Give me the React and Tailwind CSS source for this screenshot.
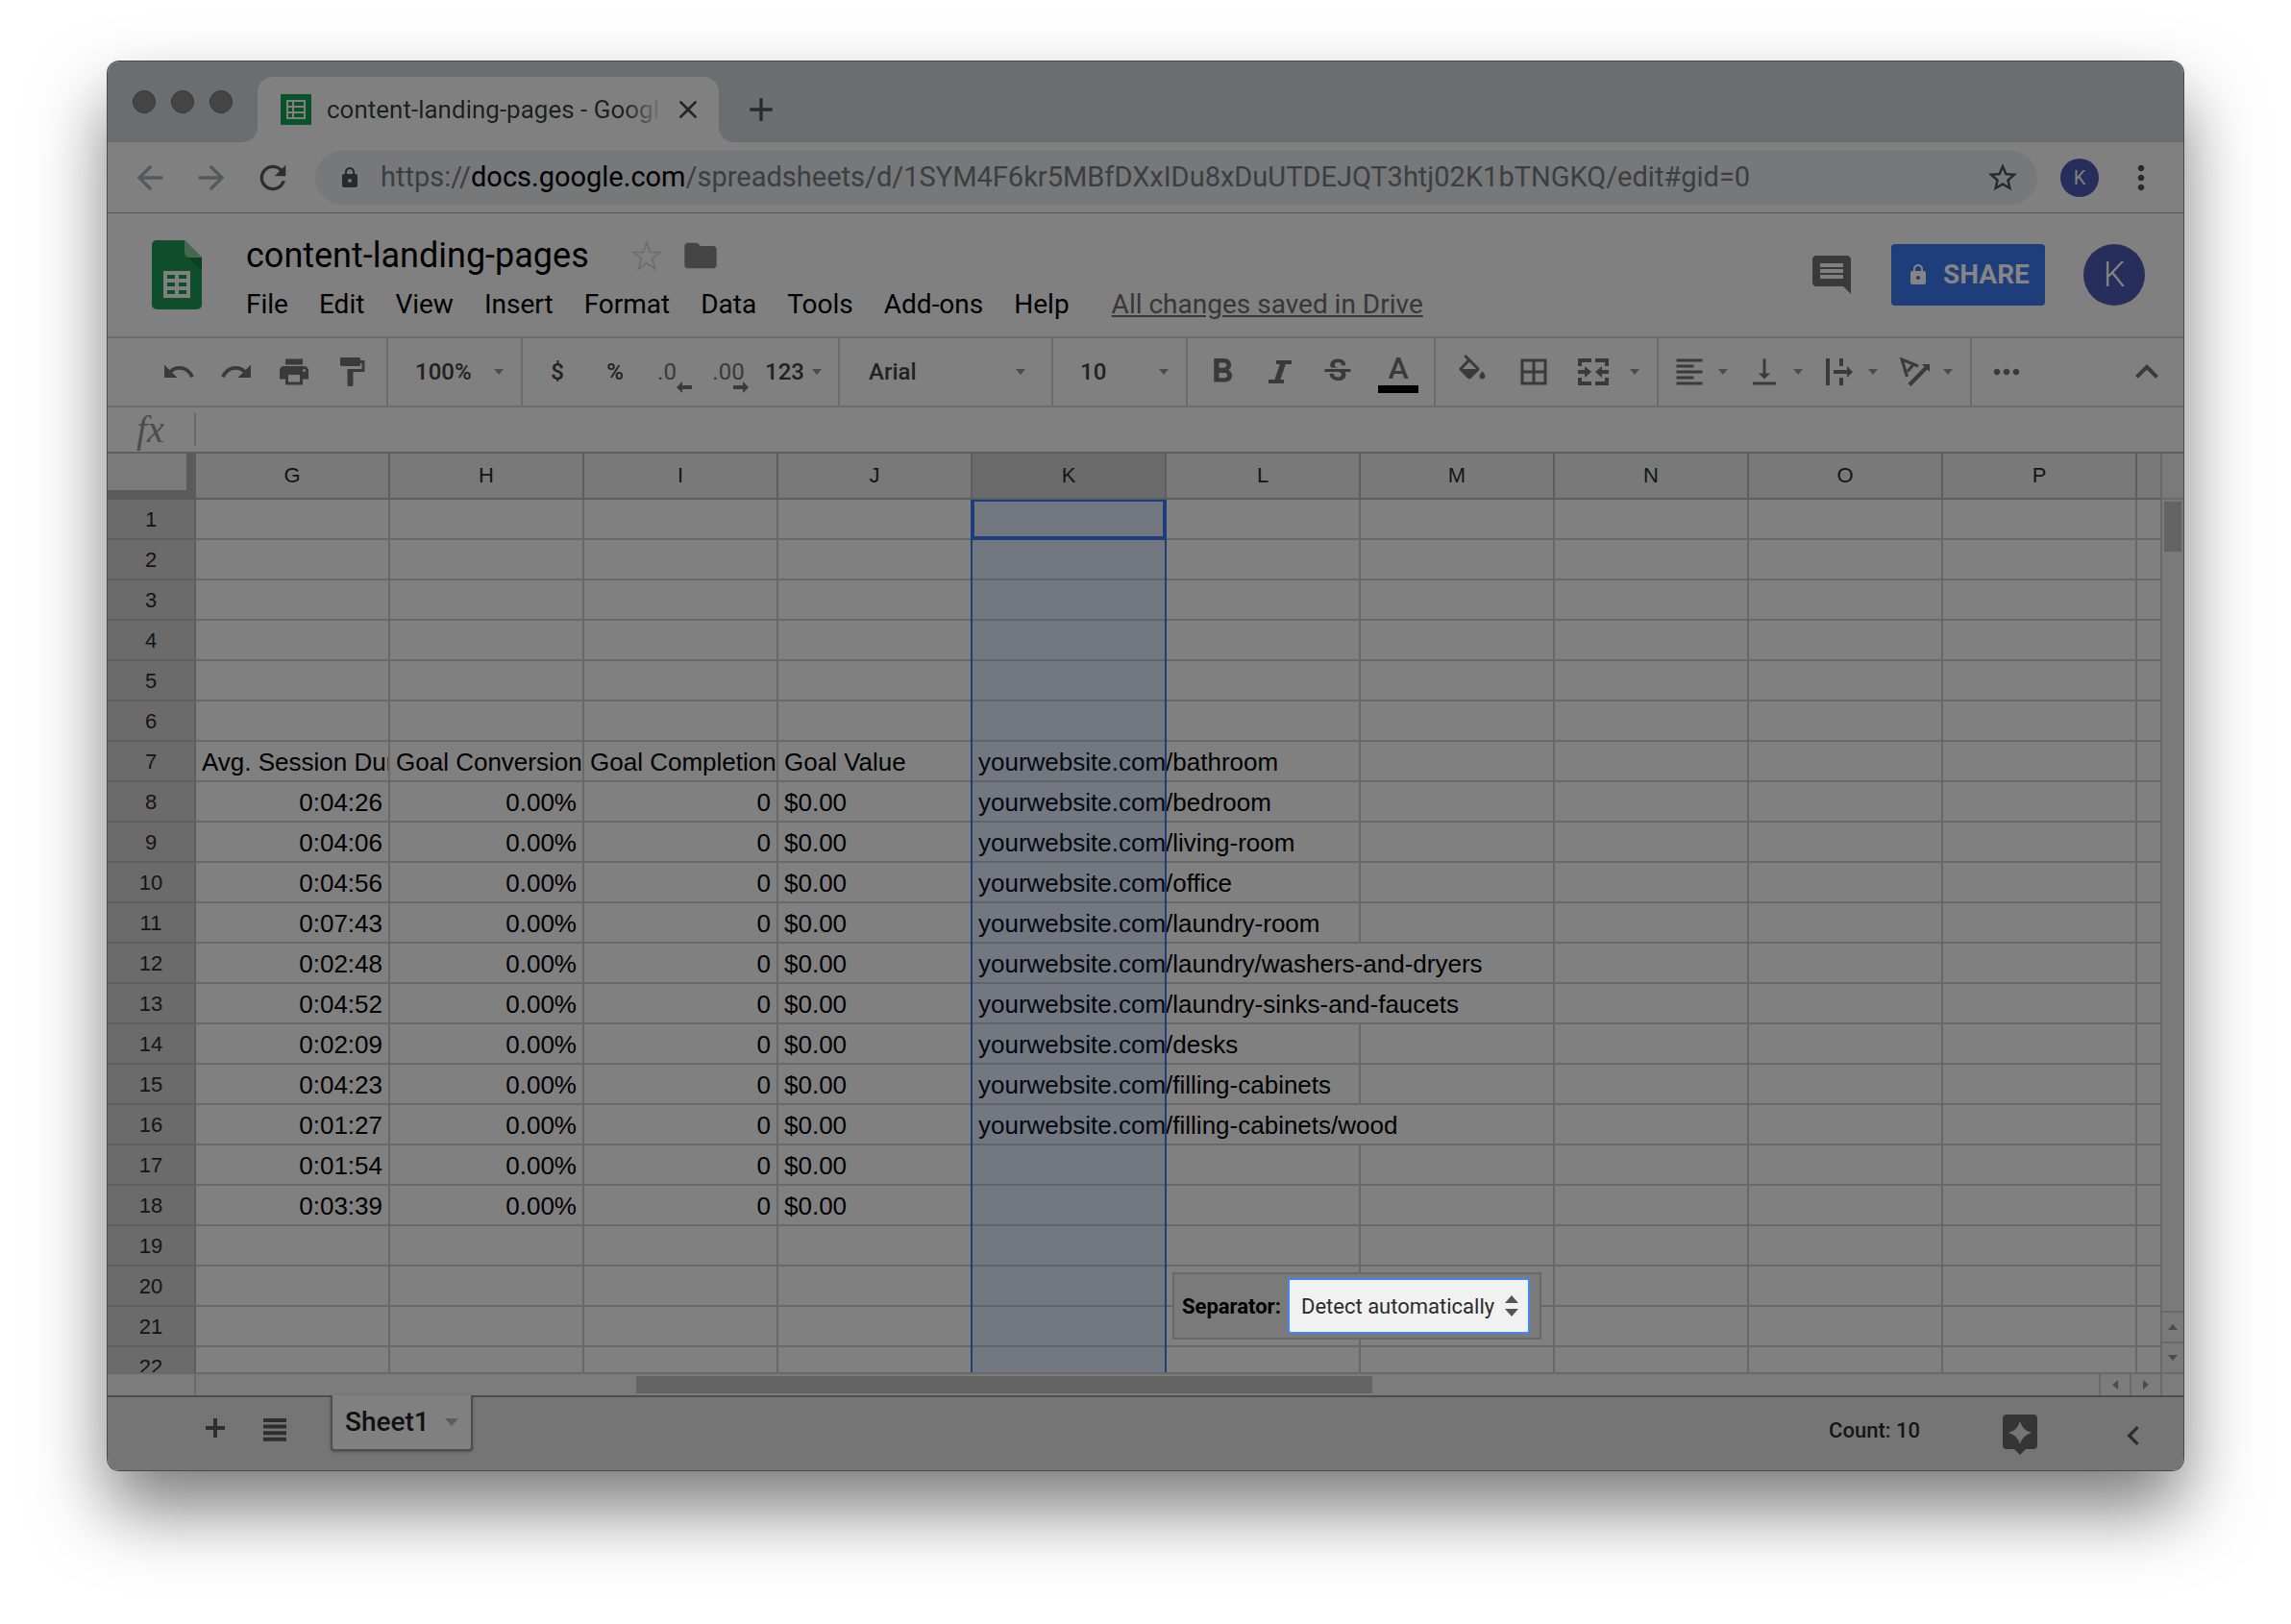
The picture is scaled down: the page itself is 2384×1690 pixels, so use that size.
import {
  MdArrowBack,
  MdArrowForward,
  MdBorderAll,
  MdClose,
  MdAdd,
  MdFolder,
  MdFormatAlignLeft,
  MdFormatBold,
  MdFormatPaint,
  MdInsertComment,
  MdKeyboardArrowLeft,
  MdKeyboardArrowUp,
  MdLock,
  MdMoreHoriz,
  MdMoreVert,
  MdPrint,
  MdRedo,
  MdRefresh,
  MdStarBorder,
  MdStrikethroughS,
  MdUndo,
  MdVerticalAlignBottom,
} from "react-icons/md";

const columns = ["G", "H", "I", "J", "K", "L", "M", "N", "O", "P"];

const menus = ["File", "Edit", "View", "Insert", "Format", "Data", "Tools", "Add-ons", "Help"];

const durations = [
  "0:04:26",
  "0:04:06",
  "0:04:56",
  "0:07:43",
  "0:02:48",
  "0:04:52",
  "0:02:09",
  "0:04:23",
  "0:01:27",
  "0:01:54",
  "0:03:39",
];

const paths = [
  "bathroom",
  "bedroom",
  "living-room",
  "office",
  "laundry-room",
  "laundry/washers-and-dryers",
  "laundry-sinks-and-faucets",
  "desks",
  "filling-cabinets",
  "filling-cabinets/wood",
];

// rows whose url runs past column L, so the grid line there is hidden
const longRows = [12, 13, 16];

function cellValue(row, col) {
  if (col === "K" && row >= 7 && row <= 16) return `yourwebsite.com/${paths[row - 7]}`;
  if (row === 7) {
    return {
      G: "Avg. Session Dur",
      H: "Goal Conversion",
      I: "Goal Completion",
      J: "Goal Value",
    }[col];
  }
  if (row >= 8 && row <= 18) {
    return { G: durations[row - 8], H: "0.00%", I: "0", J: "$0.00" }[col];
  }
  return "";
}

function cellClass(row, col) {
  const base = "h-[42px] border-b-2 border-[#696969] px-[6px] pt-[2px] pb-0 whitespace-nowrap";
  const right = col === "L" && longRows.includes(row) ? "" : "border-r-2";
  const overflow = col === "K" ? "overflow-visible" : "overflow-hidden";
  const align = row > 7 && ["G", "H", "I"].includes(col) ? "text-right" : "text-left";
  return `${base} ${right} ${overflow} ${align}`;
}

function Caret({ className = "" }) {
  return (
    <svg viewBox="0 0 10 6" className={`h-[6px] w-[10px] shrink-0 text-[#4c4c4c] ${className}`} fill="currentColor" aria-hidden>
      <path d="M0 0h10L5 6z" />
    </svg>
  );
}

function ToolButton({ label, children, className = "w-[60px]" }) {
  return (
    <button type="button" aria-label={label} className={`flex h-full shrink-0 items-center justify-center ${className}`}>
      {children}
    </button>
  );
}

function SplitButton({ label, children, gap = "gap-3" }) {
  return (
    <button type="button" aria-label={label} className={`flex h-full w-[78px] shrink-0 items-center ${gap}`}>
      {children}
      <Caret />
    </button>
  );
}

function ToolSelect({ label, value, className, selectClass = "w-[54px]" }) {
  return (
    <label className={`flex h-full shrink-0 items-center border-r-2 border-[#6b6b6b] ${className}`}>
      <select aria-label={label} className={`appearance-none bg-transparent text-2xl font-medium text-[#222] ${selectClass}`}>
        <option>{value}</option>
      </select>
      <Caret className="ml-auto" />
    </label>
  );
}

function TitleBar() {
  return (
    <div className="flex h-[84px] items-end bg-[#6c6d71]">
      <div className="flex gap-4 self-start pt-[30px] pl-[26px]">
        <span className="size-6 rounded-full border border-[#383838] bg-[#444]" />
        <span className="size-6 rounded-full border border-[#383838] bg-[#444]" />
        <span className="size-6 rounded-full border border-[#383838] bg-[#444]" />
      </div>
      <div className="relative ml-[26px] flex h-[68px] w-[480px] items-center rounded-t-2xl bg-[#808080] pl-6">
        <span className="absolute bottom-0 -left-4 size-4 overflow-hidden">
          <span className="block size-4 rounded-br-2xl shadow-[8px_8px_0_8px_#808080]" />
        </span>
        <span className="absolute -right-4 bottom-0 size-4 overflow-hidden">
          <span className="block size-4 rounded-bl-2xl shadow-[-8px_8px_0_8px_#808080]" />
        </span>
        <svg viewBox="0 0 32 32" className="size-8 shrink-0" aria-hidden>
          <rect width="32" height="32" rx="1" fill="#0a5229" />
          <path d="M6 6h20v20H6z" fill="#808080" />
          <path d="M8 8h4v4H8zM14 8h10v4H14zM8 14h4v4H8zM14 14h10v4H14zM8 20h4v4H8zM14 20h10v4H14z" fill="#0a5229" />
        </svg>
        <span className="ml-4 w-[350px] overflow-hidden text-[26px] whitespace-nowrap text-[#1e1f21] [mask-image:linear-gradient(to_right,black_310px,transparent_350px)]">
          content-landing-pages - Googl
        </span>
        <button type="button" aria-label="Close tab" className="ml-[10px] text-[#222426]">
          <MdClose className="size-8" />
        </button>
      </div>
      <button type="button" aria-label="New tab" className="mb-[14px] ml-6 text-[#2a2b2d]">
        <MdAdd className="size-10" />
      </button>
    </div>
  );
}

function AddressBar() {
  return (
    <div className="flex h-[74px] items-center border-b border-[#555] bg-[#808080] pr-6 pl-6">
      <button type="button" aria-label="Back" className="text-[#56585a]">
        <MdArrowBack className="size-10" />
      </button>
      <button type="button" aria-label="Forward" className="ml-6 text-[#56585a]">
        <MdArrowForward className="size-10" />
      </button>
      <button type="button" aria-label="Reload" className="ml-6 text-[#2c2d2f]">
        <MdRefresh className="size-10" />
      </button>
      <div className="ml-6 flex h-14 min-w-0 flex-1 items-center rounded-full bg-[#76787a] pr-[18px] pl-6">
        <MdLock className="size-6 shrink-0 text-[#28292b]" />
        <span className="ml-5 flex-1 truncate text-[29px] text-[#3b3e41]">
          https://<span className="text-black">docs.google.com</span>
          /spreadsheets/d/1SYM4F6kr5MBfDXxIDu8xDuUTDEJQT3htj02K1bTNGKQ/edit#gid=0
        </span>
        <button type="button" aria-label="Bookmark this page" className="text-[#28292b]">
          <MdStarBorder className="size-9" />
        </button>
      </div>
      <button type="button" className="ml-6 flex size-10 items-center justify-center rounded-full bg-[#272e5b] text-xl text-[#808080]">
        K
      </button>
      <button type="button" aria-label="Browser menu" className="ml-6 text-[#28292b]">
        <MdMoreVert className="size-10" />
      </button>
    </div>
  );
}

function DocHeader() {
  return (
    <header className="flex h-[128px] bg-[#808080] pr-10 pl-[46px]">
      <svg viewBox="0 0 52 72" className="mt-7 h-[72px] w-[52px] shrink-0" aria-hidden>
        <path d="M5 0h29l18 18v49a5 5 0 0 1-5 5H5a5 5 0 0 1-5-5V5a5 5 0 0 1 5-5z" fill="#0e4e2a" />
        <path d="M36 17l16 14V18z" fill="#0b4122" />
        <path d="M34 0l18 18H39a5 5 0 0 1-5-5z" fill="#45694f" />
        <path d="M12 32h28v28H12z" fill="#808080" />
        <path d="M16 36h8v4h-8zM28 36h8v4h-8zM16 44h8v4h-8zM28 44h8v4h-8zM16 52h8v4h-8zM28 52h8v4h-8z" fill="#0e4e2a" />
      </svg>
      <div className="ml-[46px] pt-5">
        <div className="flex h-12 items-center">
          <h1 className="text-4xl">content-landing-pages</h1>
          <button type="button" aria-label="Star" className="ml-11 text-[#6c6c6c]">
            <svg viewBox="0 0 32 32" className="size-8" fill="none" stroke="currentColor" strokeWidth="1.5" aria-hidden>
              <path d="M16 2l3.6 10.6H30l-8.400 6.600 3.200 11L16 23.800 7.200 30.200l3.200-11L2 12.600h10.400z" />
            </svg>
          </button>
          <button type="button" aria-label="Move to folder" className="ml-5 text-[#444]">
            <MdFolder className="size-10" />
          </button>
        </div>
        <nav className="flex h-[54px] items-center text-[28px]">
          {menus.map((menu) => (
            <button key={menu} type="button" className="mr-8">
              {menu}
            </button>
          ))}
          <a href="#history" className="ml-3 text-[#373737] underline">
            All changes saved in Drive
          </a>
        </nav>
      </div>
      <div className="ml-auto flex h-[128px] items-center">
        <button type="button" aria-label="Comments" className="text-[#3a3a3a]">
          <MdInsertComment className="size-12" />
        </button>
        <button
          type="button"
          className="ml-[38px] flex h-16 w-[160px] items-center justify-center gap-[14px] rounded bg-[#1e3d7b] text-[28px] font-bold text-[#858585]"
        >
          <MdLock className="size-6" />
          SHARE
        </button>
        <button type="button" className="ml-10 flex size-16 items-center justify-center rounded-full bg-[#272e5b] text-4xl font-light text-[#858585]">
          K
        </button>
      </div>
    </header>
  );
}

function Toolbar() {
  return (
    <div className="flex h-[74px] border-y-2 border-[#6b6b6b] bg-[#808080] text-2xl font-medium text-[#3a3a3a]">
      <div className="flex w-[292px] shrink-0 border-r-2 border-[#6b6b6b] pl-11">
        <ToolButton label="Undo">
          <MdUndo className="size-9" />
        </ToolButton>
        <ToolButton label="Redo">
          <MdRedo className="size-9" />
        </ToolButton>
        <ToolButton label="Print">
          <MdPrint className="size-9" />
        </ToolButton>
        <ToolButton label="Paint format">
          <MdFormatPaint className="size-9" />
        </ToolButton>
      </div>
      <ToolSelect label="Zoom" value="100%" className="w-[140px] pr-[18px] pl-[28px]" selectClass="w-[58px]" />
      <div className="flex w-[330px] shrink-0 border-r-2 border-[#6b6b6b] pl-[6px]">
        <ToolButton label="Format as currency">
          <span className="text-[#222]">$</span>
        </ToolButton>
        <ToolButton label="Format as percent">
          <span className="text-[#222]">%</span>
        </ToolButton>
        <ToolButton label="Decrease decimal places">
          <span className="relative pr-3 font-normal">
            .0
            <svg viewBox="0 0 16 12" className="absolute -right-1 -bottom-[6px] h-3 w-4" fill="currentColor" aria-hidden>
              <path d="M0 6l6-6v4h10v4H6v4z" />
            </svg>
          </span>
        </ToolButton>
        <ToolButton label="Increase decimal places">
          <span className="relative pr-1 font-normal">
            .00
            <svg viewBox="0 0 16 12" className="absolute right-0 -bottom-[6px] h-3 w-4" fill="currentColor" aria-hidden>
              <path d="M16 6l-6-6v4H0v4h10v4z" />
            </svg>
          </span>
        </ToolButton>
        <button type="button" className="ml-[6px] flex items-center gap-2 text-[#222]">
          123
          <Caret />
        </button>
      </div>
      <ToolSelect label="Font" value="Arial" className="w-[222px] pr-[27px] pl-[30px]" selectClass="w-[120px]" />
      <ToolSelect label="Font size" value="10" className="w-[140px] pr-[18px] pl-[28px]" />
      <div className="flex w-[258px] shrink-0 border-r-2 border-[#6b6b6b] pl-[6px]">
        <ToolButton label="Bold">
          <MdFormatBold className="size-[42px]" />
        </ToolButton>
        <ToolButton label="Italic">
          <svg viewBox="0 0 24 24" className="size-6" fill="currentColor" aria-hidden>
            <path d="M8 0h16v4h-6.200l-5.400 16H16v4H0v-4h6.400l5.400-16H8z" />
          </svg>
        </ToolButton>
        <ToolButton label="Strikethrough">
          <MdStrikethroughS className="size-9" />
        </ToolButton>
        <ToolButton label="Text color" className="w-[66px]">
          <span className="flex flex-col items-center">
            <span className="text-[32px] leading-9">A</span>
            <span className="h-2 w-[42px] bg-black" />
          </span>
        </ToolButton>
      </div>
      <div className="flex w-[232px] shrink-0 border-r-2 border-[#6b6b6b] pl-[6px]">
        <ToolButton label="Fill color" className="w-16">
          <svg viewBox="0 0 24 24" className="size-9" fill="currentColor" aria-hidden>
            <path d="M16.560 8.940L7.620 0 6.210 1.410l2.380 2.380-5.150 5.150c-.59.59-.59 1.540 0 2.120l5.500 5.500c.29.29.68.44 1.060.44s.77-.15 1.060-.44l5.500-5.500c.59-.58.59-1.530 0-2.120zM5.210 10L10 5.210 14.790 10H5.210zM19 11.500s-2 2.170-2 3.500c0 1.100.9 2 2 2s2-.9 2-2c0-1.330-2-3.500-2-3.500z" />
          </svg>
        </ToolButton>
        <ToolButton label="Borders" className="w-16">
          <MdBorderAll className="size-9" />
        </ToolButton>
        <div className="ml-3 flex">
          <SplitButton label="Merge cells" gap="gap-5">
            <svg viewBox="0 0 36 36" className="size-9" fill="currentColor" aria-hidden>
              <path d="M2 4h14v4H6v4H2zM20 4h14v8h-4V8H20zM2 24h4v4h10v4H2zM30 24h4v8H20v-4h10zM2 16h7v-4l7 6-7 6v-4H2zM34 16h-7v-4l-7 6 7 6v-4h7z" />
            </svg>
          </SplitButton>
        </div>
      </div>
      <div className="flex w-[326px] shrink-0 border-r-2 border-[#6b6b6b] pl-[14px]">
        <SplitButton label="Horizontal align">
          <MdFormatAlignLeft className="size-9" />
        </SplitButton>
        <SplitButton label="Vertical align">
          <MdVerticalAlignBottom className="size-9" />
        </SplitButton>
        <SplitButton label="Text wrapping">
          <svg viewBox="0 0 36 36" className="size-9" fill="currentColor" aria-hidden>
            <path d="M4 4h4v28H4zM18 4h4v8h-4zM18 24h4v8h-4zM12 16h14v-4l6 6-6 6v-4H12z" />
          </svg>
        </SplitButton>
        <SplitButton label="Text rotation">
          <svg viewBox="0 0 36 36" className="size-9" fill="none" stroke="currentColor" strokeWidth="3" aria-hidden>
            <path d="M10.500 23L5 5l17 7M11 17.500l6-7" />
            <path d="M13 31.500L31 13" strokeWidth="4" />
            <path d="M26 10h8v8z" fill="currentColor" stroke="none" />
          </svg>
        </SplitButton>
      </div>
      <ToolButton label="More" className="w-[72px]">
        <MdMoreHoriz className="size-10" />
      </ToolButton>
      <ToolButton label="Hide the menus" className="mr-[14px] ml-auto w-12">
        <MdKeyboardArrowUp className="size-12" />
      </ToolButton>
    </div>
  );
}

function Grid() {
  return (
    <div className="relative h-[956px] min-w-0 flex-1 overflow-hidden">
      <table className="w-full table-fixed border-separate border-spacing-0 bg-[#808080] font-['Liberation_Sans',Arial,sans-serif] text-[26px] leading-8">
        <colgroup>
          <col className="w-[92px]" />
          {columns.map((col) => (
            <col key={col} className="w-[202px]" />
          ))}
          <col />
        </colgroup>
        <thead>
          <tr className="text-[22px] text-[#141414]">
            <td className="h-12 border-r-10 border-b-10 border-[#5b5b5b] bg-[#7a7a7a] p-0" />
            {columns.map((col) => (
              <th
                key={col}
                scope="col"
                className={`h-12 border-r-2 border-b-2 border-[#5e5e5e] p-0 font-normal ${col === "K" ? "bg-[#6b6b6b]" : "bg-[#797979]"}`}
              >
                {col}
              </th>
            ))}
            <td className="border-b-2 border-[#5e5e5e] bg-[#797979] p-0" />
          </tr>
        </thead>
        <tbody>
          {Array.from({ length: 22 }, (_, i) => i + 1).map((row) => (
            <tr key={row}>
              <th
                scope="row"
                className="h-[42px] border-r-2 border-b-2 border-[#5e5e5e] bg-[#6b6b6b] px-0 pt-[2px] pb-0 text-[22px] font-normal text-[#141414]"
              >
                {row}
              </th>
              {columns.map((col) => (
                <td key={col} className={cellClass(row, col)}>
                  {cellValue(row, col)}
                </td>
              ))}
              <td className="border-b-2 border-[#696969] p-0" />
            </tr>
          ))}
        </tbody>
      </table>

      {/* column K selection */}
      <div className="absolute top-12 bottom-0 left-[898px] w-[204px] border-x-2 border-[#1e3d7b] bg-[#1a3a80]/13">
        <div className="absolute top-0 -right-[2px] -left-[2px] h-[42px] border-4 border-t-2 border-[#1e3d7b]" />
      </div>

      {/* separator picker left behind by "Split text to columns" */}
      <div className="absolute top-[852px] left-[1108px] flex h-[70px] w-[384px] items-center border-2 border-[#696969] bg-[#7a7a7a] pl-2">
        <label htmlFor="separator" className="w-[110px] text-[22px] font-bold">
          Separator:
        </label>
        <div className="relative">
          <select
            id="separator"
            className="h-[58px] w-[252px] appearance-none rounded-[3px] border-2 border-[#4285f4] bg-[#f1f1f1] pl-3 text-[22px] text-[#2b2b2b]"
          >
            <option>Detect automatically</option>
          </select>
          <svg viewBox="0 0 14 22" className="pointer-events-none absolute top-[18px] right-3 h-[22px] w-[14px]" fill="#555" aria-hidden>
            <path d="M0 8l7-8 7 8zM0 14h14l-7 8z" />
          </svg>
        </div>
      </div>
    </div>
  );
}

function VerticalScroll() {
  return (
    <div className="flex w-6 shrink-0 flex-col border-l-2 border-[#696969] bg-[#7a7a7a]">
      <div className="h-12 border-b-2 border-[#696969]" />
      <div className="mx-[2px] mt-[2px] h-[52px] bg-[#646464]" />
      <button type="button" aria-label="Scroll up" className="mt-auto flex h-8 items-center justify-center border-t-2 border-[#696969]">
        <Caret className="rotate-180" />
      </button>
      <button type="button" aria-label="Scroll down" className="flex h-8 items-center justify-center border-t-2 border-[#696969]">
        <Caret />
      </button>
    </div>
  );
}

function HorizontalScroll() {
  return (
    <div className="flex h-6 border-t-2 border-[#696969] bg-[#7c7c7c]">
      <div className="w-[92px] shrink-0 border-r-2 border-[#696969]" />
      <div className="flex-1 py-[2px] pl-[458px]">
        <div className="h-[18px] w-[766px] bg-[#646464]" />
      </div>
      <button type="button" aria-label="Scroll left" className="flex w-8 items-center justify-center border-l-2 border-[#696969]">
        <Caret className="rotate-90" />
      </button>
      <button type="button" aria-label="Scroll right" className="flex w-8 items-center justify-center border-l-2 border-[#696969]">
        <Caret className="-rotate-90" />
      </button>
      <div className="w-6 border-l-2 border-[#696969]" />
    </div>
  );
}

function SheetBar() {
  return (
    <footer className="flex h-[78px] items-start border-t-2 border-[#4e4e4e] bg-[#757575] pr-8 pl-[94px] text-[#2e2e2e]">
      <button type="button" aria-label="Add sheet" className="mt-[14px]">
        <svg viewBox="0 0 36 36" className="size-9" fill="currentColor" aria-hidden>
          <path d="M16 8h4v8h8v4h-8v8h-4v-8H8v-4h8z" />
        </svg>
      </button>
      <button type="button" aria-label="All sheets" className="mt-[22px] ml-8">
        <svg viewBox="0 0 24 24" className="size-6" fill="currentColor" aria-hidden>
          <path d="M0 0h24v4H0zM0 6.600h24v4H0zM0 13.200h24v4H0zM0 19.800h24v4H0z" />
        </svg>
      </button>
      <button
        type="button"
        className="-mt-[2px] ml-[46px] flex h-[58px] w-[148px] items-center gap-4 rounded-b border-2 border-t-0 border-[#4e4e4e] bg-[#808080] pl-[13px] text-[28px] font-medium text-[#111] shadow-[0_1px_3px_rgba(0,0,0,0.3)]"
      >
        Sheet1
        <svg viewBox="0 0 14 8" className="h-2 w-[14px]" fill="#5c5c5c" aria-hidden>
          <path d="M0 0h14L7 8z" />
        </svg>
      </button>
      <span className="mt-[18px] ml-auto text-[22px] font-medium text-[#151515]">Count: 10</span>
      <button type="button" aria-label="Explore" className="mt-[18px] ml-[86px]">
        <svg viewBox="0 0 36 42" className="h-[42px] w-9" aria-hidden>
          <path d="M4 0h28a4 4 0 0 1 4 4v28a4 4 0 0 1-4 4h-8l-6 6-6-6H4a4 4 0 0 1-4-4V4a4 4 0 0 1 4-4z" fill="#353535" />
          <path d="M18 7q2.500 9.500 12 12-9.500 2.500-12 12-2.500-9.500-12-12 9.500-2.500 12-12z" fill="#757575" />
        </svg>
      </button>
      <button type="button" aria-label="Show side panel" className="mt-5 ml-20">
        <MdKeyboardArrowLeft className="size-10" />
      </button>
    </footer>
  );
}

export default function App() {
  return (
    <div className="min-h-screen bg-white px-28 pt-16 pb-40 font-[Roboto,sans-serif] text-black">
      <div className="overflow-hidden rounded-xl shadow-[0_0_0_1px_#4a4a4a,0_40px_76px_rgba(0,0,0,0.52)]">
        <TitleBar />
        <AddressBar />
        <DocHeader />
        <Toolbar />
        <div className="flex h-12 items-center border-b-2 border-[#5e5e5e] bg-[#808080]">
          <label htmlFor="formula" className="w-[90px] pl-[30px] font-['Liberation_Serif',serif] text-[40px] leading-none text-[#4c4c4c] italic">
            fx
          </label>
          <input id="formula" type="text" className="h-[34px] flex-1 border-l-2 border-[#696969] px-3 text-2xl outline-none" />
        </div>
        <div className="flex">
          <Grid />
          <VerticalScroll />
        </div>
        <HorizontalScroll />
        <SheetBar />
      </div>
    </div>
  );
}
